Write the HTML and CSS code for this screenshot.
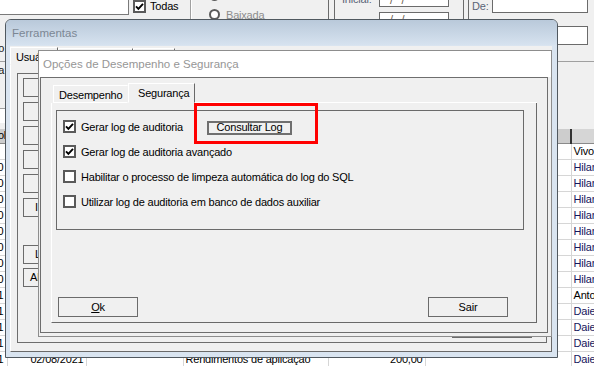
FILE: index.html
```html
<!doctype html>
<html lang="pt-BR">
<head>
	<meta charset="UTF-8">
	<title>Ferramentas - Opções de Desempenho e Segurança</title>
	<link rel="stylesheet" href="styles.css">
</head>
<body>
<div class="app">

	<!-- filtros do topo -->
	<div class="top">
		<div class="memo"></div>
		<div class="todas"><span class="cb"><svg viewBox="0 0 9 9"><path d="M1 4.4l2.4 2.5L8 1.8"/></svg></span>Todas</div>
		<div class="vsep"></div>
		<div class="status">
			<div class="rad"><span class="rb"></span>Emitida</div>
			<div class="rad"><span class="rb"></span>Baixada</div>
		</div>
		<div class="grp">
			<div class="grp-in">
				<span class="flt ini">Inicial:</span>
				<div class="dates">
					<div class="inp">/ &nbsp; /</div>
					<div class="inp">/ &nbsp; /</div>
				</div>
			</div>
		</div>
		<div class="grp grp-de">
			<div class="grp-in">
				<span class="flt de">De:</span>
				<div class="inp wide"></div>
			</div>
		</div>
	</div>
	<div class="row2">
		<span class="lbl-l">Período:</span>
		<div class="inp-r"></div>
	</div>
	<div class="tools">
		<span class="lbl-l">Conta:</span>
	</div>
	<div class="strip"></div>

	<!-- grade de lançamentos -->
	<table class="grid">
		<colgroup>
			<col class="c0"><col class="c1"><col class="c2"><col class="c3"><col class="c4"><col class="c5"><col class="c6">
		</colgroup>
		<thead>
			<tr><th class="r">Controle</th><th></th><th></th><th></th><th></th><th></th><th class="last"></th></tr>
		</thead>
		<tbody>
			<tr><td></td><td></td><td></td><td></td><td></td><td></td><td>Vivo</td></tr>
			<tr><td class="r">10</td><td></td><td></td><td></td><td></td><td></td><td class="nav">Hilario</td></tr>
			<tr><td class="r">20</td><td></td><td></td><td></td><td></td><td></td><td class="nav">Hilario</td></tr>
			<tr><td class="r">30</td><td></td><td></td><td></td><td></td><td></td><td class="nav">Hilario</td></tr>
			<tr><td class="r">40</td><td></td><td></td><td></td><td></td><td></td><td class="nav">Hilario</td></tr>
			<tr><td class="r">50</td><td></td><td></td><td></td><td></td><td></td><td class="nav">Hilario</td></tr>
			<tr><td class="r">60</td><td></td><td></td><td></td><td></td><td></td><td class="nav">Hilario</td></tr>
			<tr><td class="r">70</td><td></td><td></td><td></td><td></td><td></td><td class="nav">Hilario</td></tr>
			<tr><td class="r">80</td><td></td><td></td><td></td><td></td><td></td><td class="nav">Hilario</td></tr>
			<tr><td class="r">91</td><td></td><td></td><td></td><td></td><td></td><td>Antonio</td></tr>
			<tr><td class="r">101</td><td></td><td></td><td></td><td></td><td></td><td class="nav">Daiene</td></tr>
			<tr><td class="r">111</td><td></td><td></td><td></td><td></td><td></td><td class="nav">Daiene</td></tr>
			<tr><td class="r">121</td><td></td><td></td><td></td><td></td><td></td><td class="nav">Daiene</td></tr>
			<tr><td class="r">131</td><td class="r">02/08/2021</td><td></td><td>Rendimentos de aplicação</td><td class="r">200,00</td><td></td><td class="nav">Daiene</td></tr>
		</tbody>
	</table>

	<!-- janela Ferramentas -->
	<div class="win-f">
		<div class="cap-f">Ferramentas</div>
		<div class="fbody">
			<div class="fclient">
				<div class="ftabs">
					<div class="ftab on">Usuários</div>
					<div class="ftab t2"></div>
					<div class="ftab t3"></div>
					<div class="fill"></div>
				</div>
				<div class="fpage">
					<div class="fpanel">
						<div class="fbtn"></div>
						<div class="fbtn"></div>
						<div class="fbtn"></div>
						<div class="fbtn"></div>
						<div class="fbtn"></div>
						<div class="fbtn b-i">I</div>
						<div class="fbtn b-l gap">L</div>
						<div class="fbtn b-al">Al</div>
						<div class="fclose"></div>
					</div>
				</div>
			</div>
		</div>
	</div>

	<!-- janela Opções -->
	<div class="win-o">
		<div class="cap-o">Opções de Desempenho e Segurança</div>
		<div class="oclient">
			<div class="otabs">
				<div class="otab">Desempenho</div>
				<div class="otab on">Segurança</div>
				<div class="fill"></div>
			</div>
			<div class="opage">
				<div class="grpbox">
					<div class="opt">
						<span class="cb"><svg viewBox="0 0 9 9"><path d="M1 4.4l2.4 2.5L8 1.8"/></svg></span>
						<span class="txt">Gerar log de auditoria</span>
						<div class="btn-log">Consultar Log</div>
					</div>
					<div class="opt">
						<span class="cb"><svg viewBox="0 0 9 9"><path d="M1 4.4l2.4 2.5L8 1.8"/></svg></span>
						<span>Gerar log de auditoria avançado</span>
					</div>
					<div class="opt">
						<span class="cb"></span>
						<span>Habilitar o processo de limpeza automática do log do SQL</span>
					</div>
					<div class="opt">
						<span class="cb"></span>
						<span>Utilizar log de auditoria em banco de dados auxiliar</span>
					</div>
				</div>
				<div class="obtns">
					<div class="obtn"><u>O</u>k</div>
					<div class="obtn">Sair</div>
				</div>
			</div>
		</div>
	</div>

	<div class="mark"></div>
</div>
</body>
</html>
```
FILE: styles.css
```css
* {
	box-sizing: border-box;
}
body {
	margin: 0;
}
.app {
	position: relative;
	width: 594px;
	height: 366px;
	overflow: hidden;
	background: #f0f0f0;
	font-family: "Liberation Sans", Arial, sans-serif;
	font-size: 11px;
	letter-spacing: -0.2px;
	color: #000;
}

/* topo */
.top {
	display: flex;
	align-items: flex-start;
	height: 19px;
}
.memo {
	width: 129px;
	height: 16px;
	margin-top: -1px;
	background: #fff;
	border-right: 1px solid #7a7a7a;
	border-bottom: 1px solid #7a7a7a;
	flex: none;
}
.todas {
	width: 61px;
	padding-left: 4px;
	margin-top: -1px;
	display: flex;
	align-items: center;
	gap: 4px;
	line-height: 14px;
	flex: none;
}
.cb {
	width: 13px;
	height: 13px;
	border: 2px solid #5a5a5a;
	background: #fff;
	display: flex;
	align-items: center;
	justify-content: center;
	flex: none;
}
.cb svg {
	width: 9px;
	height: 9px;
	display: block;
}
.cb path {
	fill: none;
	stroke: #000;
	stroke-width: 1.9;
}
.vsep {
	width: 2px;
	height: 19px;
	border-left: 1px solid #a0a0a0;
	border-right: 1px solid #fff;
	flex: none;
}
.status {
	width: 136px;
	padding-left: 17px;
	margin-top: -12px;
	color: #8d8d8d;
	flex: none;
}
.rad {
	height: 15px;
	display: flex;
	align-items: center;
	gap: 6px;
}
.rad + .rad {
	margin-top: 4px;
}
.rb {
	width: 11px;
	height: 11px;
	border: 2px solid #5a5a5a;
	border-radius: 50%;
	background: #fff;
}
.grp {
	height: 19px;
	border-left: 1px solid #6b6b6b;
	padding-left: 5px;
	flex: none;
}
.grp-in {
	height: 19px;
	border-left: 1px solid #6b6b6b;
	padding-left: 7px;
	display: flex;
	align-items: flex-start;
}
.grp-de {
	margin-left: 14px;
	padding-left: 4px;
}
.grp-de .grp-in {
	padding-left: 3px;
}
.flt {
	color: #5b6577;
	line-height: 13px;
}
.ini {
	width: 37px;
	margin-top: -7px;
}
.de {
	width: 20px;
}
.dates {
	display: flex;
	flex-direction: column;
	gap: 5px;
	margin-top: -7px;
}
.inp {
	width: 70px;
	height: 14px;
	background: #fff;
	border: 1px solid #6b6b6b;
	color: #6a5a4a;
	padding-left: 10px;
	line-height: 12px;
}
.inp.wide {
	width: 96px;
	margin-top: -1px;
}
.row2 {
	display: flex;
	height: 43px;
	border-bottom: 1px solid #a0a0a0;
}
.lbl-l {
	width: 7px;
	height: 13px;
	line-height: 13px;
	display: flex;
	justify-content: flex-end;
	white-space: nowrap;
	color: #222;
	margin-top: 23px;
}
.tools .lbl-l {
	margin-top: 2px;
}
.inp-r {
	margin-left: auto;
	margin-right: 6px;
	margin-top: 7px;
	width: 31px;
	height: 19px;
	background: #fff;
	border: 1px solid #6b6b6b;
}
.tools {
	height: 44px;
}
.strip {
	width: 40px;
	height: 15px;
	background: #fff;
	border-top: 1px solid #a0a0a0;
	margin-bottom: 6px;
}

/* grade */
.grid {
	margin-left: -30px;
	width: 654px;
	table-layout: fixed;
	border-collapse: collapse;
	background: #fff;
}
.c0 { width: 37px; }
.c1 { width: 79px; }
.c2 { width: 97px; }
.c3 { width: 145px; }
.c4 { width: 97px; }
.c5 { width: 146px; }
.c6 { width: 53px; }
.grid th {
	height: 14px;
	padding: 0 2px;
	background: #cdcdcd;
	border-right: 1px solid #8a8a8a;
	border-bottom: 1px solid #8a8a8a;
	font-weight: normal;
	text-align: left;
	line-height: 13px;
	white-space: nowrap;
	overflow: hidden;
}
.grid th.last {
	border-left: 2px solid #333;
	background: #d6d6d6;
}
.grid td {
	height: 16px;
	padding: 0 2px;
	border-right: 1px solid #d6d6d6;
	border-bottom: 1px solid #d6d6d6;
	line-height: 15px;
	white-space: nowrap;
	overflow: hidden;
}
.grid .r {
	text-align: right;
}
.grid th.r,
.grid td:first-child {
	padding-right: 3px;
}
.grid td.nav {
	color: #15155c;
}

/* janela Ferramentas */
.win-f {
	position: absolute;
	left: 5px;
	top: 19px;
	width: 553px;
	height: 339px;
	border: 1px solid #50585f;
	border-radius: 6px 6px 0 0;
	background: #d9e4f0;
	display: flex;
	flex-direction: column;
}
.cap-f {
	height: 25px;
	flex: none;
	background: linear-gradient(#b9c9da, #d6e2ef);
	border-radius: 5px 5px 0 0;
	padding-left: 6px;
	line-height: 27px;
	color: #7c8794;
	font-size: 11.5px;
	letter-spacing: 0;
}
.fbody {
	flex: 1;
	display: flex;
	padding: 1px 5px 5px 4px;
	min-height: 0;
}
.fclient {
	flex: 1;
	background: #f0f0f0;
	display: flex;
	flex-direction: column;
}
.ftabs {
	display: flex;
	align-items: flex-end;
	height: 19px;
	flex: none;
}
.ftab {
	height: 17px;
	border: 1px solid;
	border-color: #fff #696969 #fff #fff;
	padding-left: 5px;
	line-height: 14px;
	white-space: nowrap;
	overflow: hidden;
}
.ftab.on {
	height: 18px;
	width: 48px;
	border-bottom-color: transparent;
	padding-top: 2px;
}
.ftab.t2 { width: 75px; }
.ftab.t3 { width: 42px; }
.fill {
	flex: 1;
	border-bottom: 1px solid #fff;
}
.fpage {
	flex: 1;
	display: flex;
	border: 1px solid;
	border-top: none;
	border-color: #fff #696969 #696969 #fff;
	padding: 8px 4px 8px 6px;
}
.fpanel {
	flex: 1;
	display: flex;
	flex-direction: column;
	border: 1px solid #6d6d6d;
	padding: 4px 5px;
}
.fbtn {
	width: 86px;
	height: 19px;
	flex: none;
	border: 1px solid #6b6b6b;
	margin-bottom: 5px;
	padding-left: 20px;
	line-height: 17px;
}
.fbtn.b-i,
.fbtn.b-l {
	padding-left: 11px;
}
.fbtn.b-al {
	padding-left: 6px;
}
.fbtn.gap {
	margin-top: 23px;
	margin-bottom: 4px;
}
.fclose {
	margin-top: auto;
	align-self: flex-end;
	margin-right: 9px;
	width: 80px;
	height: 20px;
	border: 1px solid #6b6b6b;
}

/* janela Opções */
.win-o {
	position: absolute;
	left: 38px;
	top: 50px;
	width: 514px;
	height: 287px;
	border: 1px solid #8d8d8d;
	background: #f0f0f0;
	display: flex;
	flex-direction: column;
}
.cap-o {
	height: 26px;
	flex: none;
	background: #fff;
	padding-left: 4px;
	line-height: 26px;
	color: #969696;
	font-size: 11.5px;
	letter-spacing: 0;
}
.oclient {
	flex: 1;
	display: flex;
	flex-direction: column;
	margin: 0 3px 3px 1px;
	border: 1px solid #6e6e6e;
	padding: 5px 10px 9px 10px;
}
.otabs {
	display: flex;
	align-items: flex-end;
	height: 20px;
	flex: none;
}
.otab {
	height: 18px;
	width: 75px;
	margin-left: 2px;
	border: 1px solid;
	border-color: #fff transparent #fff #fff;
	padding: 1px 0 0 5px;
	line-height: 16px;
}
.otab.on {
	height: 20px;
	width: 67px;
	margin-left: 0;
	border-color: #fff #696969 transparent #fff;
	padding: 1px 0 0 9px;
}
.opage {
	flex: 1;
	display: flex;
	flex-direction: column;
	border: 1px solid;
	border-top: none;
	border-color: #fff #696969 #696969 #fff;
	padding: 7px 12px 5px 4px;
}
.grpbox {
	height: 120px;
	flex: none;
	border: 1px solid #6a6a6a;
	padding: 3px 6px;
}
.opt {
	height: 25px;
	display: flex;
	align-items: center;
	gap: 5px;
}
.opt .txt {
	width: 126px;
	flex: none;
}
.btn-log {
	width: 85px;
	height: 14px;
	margin-top: 3px;
	margin-left: -5px;
	border: 2px solid #6f6f6f;
	text-align: center;
	line-height: 9px;
}
.obtns {
	margin-top: auto;
	display: flex;
	justify-content: space-between;
	padding: 0 16px 0 2px;
}
.obtn {
	width: 80px;
	height: 20px;
	border: 1px solid #6b6b6b;
	text-align: center;
	line-height: 18px;
}

.mark {
	position: absolute;
	left: 194px;
	top: 103px;
	width: 124px;
	height: 41px;
	border: 3px solid #ff0000;
}
```
